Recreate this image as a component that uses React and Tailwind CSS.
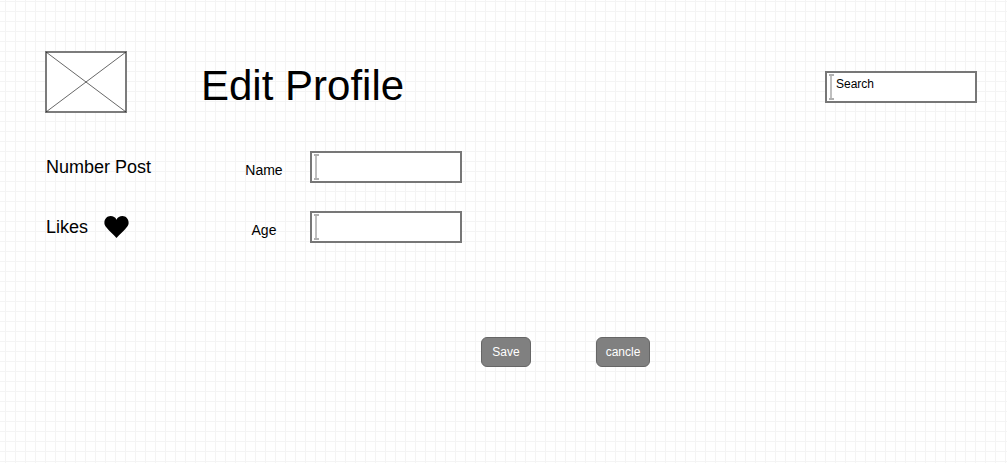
import React from "react";

function Caret() {
  return (
    <svg
      className="pointer-events-none absolute left-1 top-[3px]"
      width="5"
      height="26"
      viewBox="0 0 5 26"
      shapeRendering="crispEdges"
      aria-hidden="true"
    >
      <path d="M1 1h2v24h-2z" fill="#bfbfbf" />
      <path d="M0 0h5v2H0zM0 24h5v2H0z" fill="#b0b0b0" />
    </svg>
  );
}

function TextBox({ className = "", ...props }) {
  return (
    <div className="relative w-[152px] shrink-0">
      <input
        type="text"
        className={`block h-8 w-full border-2 border-[#777777] bg-white pl-[9px] pr-2 text-xs text-black outline-none placeholder:text-black placeholder:opacity-100 ${className}`}
        {...props}
      />
      <Caret />
    </div>
  );
}

function Field({ id, label }) {
  return (
    <div className="flex h-8 items-center">
      <label htmlFor={id} className="w-[92px] pt-[6px] text-center text-sm">
        {label}
      </label>
      <TextBox id={id} name={id} />
    </div>
  );
}

function ImagePlaceholder() {
  return (
    <svg width="82" height="62" viewBox="0 0 82 62" className="shrink-0" role="img" aria-label="Profile image">
      <rect x="1" y="1" width="80" height="60" fill="#ffffff" stroke="#7c7c7c" strokeWidth="2" />
      <path d="M1 1L81 61M81 1L1 61" stroke="#000000" strokeWidth="0.6" fill="none" />
    </svg>
  );
}

function Heart() {
  return (
    <svg width="25" height="22" viewBox="0 0 26 22" preserveAspectRatio="none" aria-hidden="true">
      <path
        d="M13 22C9.6 18.4 5.6 15.2 2.6 11.6C0.9 9.7 0.4 8.3 0.4 6.7C0.4 3 3.2 0.1 6.8 0.1C9.6 0.1 11.9 1.5 13 3.7C14.1 1.5 16.4 0.1 19.2 0.1C22.8 0.1 25.6 3 25.6 6.7C25.6 8.3 25.1 9.7 23.4 11.6C20.4 15.2 16.4 18.4 13 22Z"
        fill="#000000"
      />
    </svg>
  );
}

function Button({ children, className, ...props }) {
  return (
    <button
      className={`h-[30px] rounded-md border border-[#666666] bg-[#808080] text-xs text-white ${className}`}
      {...props}
    >
      {children}
    </button>
  );
}

export default function App() {
  return (
    <main className="min-h-screen bg-white bg-[linear-gradient(to_right,#f4f4f4_1px,transparent_1px),linear-gradient(to_bottom,#f4f4f4_1px,transparent_1px)] bg-size-[10px_10px] bg-position-[5px_1px] pb-10 pl-[45px] pr-[30px] pt-[51px] font-['Liberation_Sans',Arial,sans-serif] text-black">
      <header className="flex items-start">
        <ImagePlaceholder />
        <h1 className="ml-[74px] mt-[9px] whitespace-nowrap text-[42px] leading-[52px]">Edit Profile</h1>
        <div className="ml-auto mt-5">
          <TextBox type="search" aria-label="Search" placeholder="Search" className="pb-[6px]" />
        </div>
      </header>

      <form onSubmit={(event) => event.preventDefault()}>
        <div className="mt-[38px] flex">
          <div className="flex w-[173px] flex-col gap-7 pl-px text-lg">
            <p className="flex h-8 items-center">Number Post</p>
            <p className="flex h-8 items-center gap-4">
              Likes
              <Heart />
            </p>
          </div>
          <div className="flex flex-col gap-7">
            <Field id="name" label="Name" />
            <Field id="age" label="Age" />
          </div>
        </div>

        <div className="ml-[436px] mt-[94px] flex gap-[65px]">
          <Button type="submit" className="w-[50px]">Save</Button>
          <Button type="button" className="w-[54px]">cancle</Button>
        </div>
      </form>
    </main>
  );
}
